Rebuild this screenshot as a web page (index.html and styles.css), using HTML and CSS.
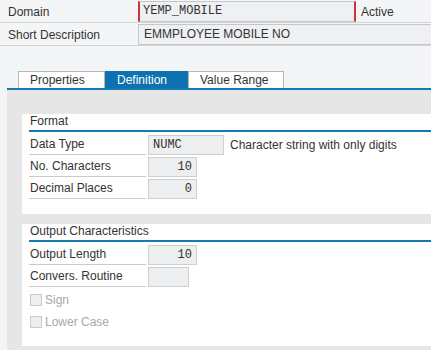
FILE: index.html
```html
<!DOCTYPE html>
<html lang="en">
<head>
  <meta charset="UTF-8" />
  <title>Domain YEMP_MOBILE</title>
  <link rel="stylesheet" href="styles.css">
</head>
<body>

  <!-- Header fields -->
  <div class="head">
    <div class="hrow">
      <span class="hlabel">Domain</span>
      <span class="hfield mono focus">YEMP_MOBILE</span>
      <span class="status">Active</span>
    </div>
    <div class="hrow">
      <span class="hlabel">Short Description</span>
      <span class="hfield wide">EMMPLOYEE MOBILE NO</span>
    </div>
  </div>

  <!-- Tab strip -->
  <div class="tabs">
    <span class="tab t-props">Properties</span>
    <span class="tab t-def active">Definition</span>
    <span class="tab t-range">Value Range</span>
  </div>
  <div class="tabline"></div>

  <div class="panel">
    <!-- Format -->
    <div class="group g-format">
      <div class="ghead">Format</div>
      <div class="row">
        <span class="label">Data Type</span>
        <span class="field mono f-type">NUMC</span>
        <span class="desc">Character string with only digits</span>
      </div>
      <div class="row">
        <span class="label">No. Characters</span>
        <span class="field mono num">10</span>
      </div>
      <div class="row">
        <span class="label">Decimal Places</span>
        <span class="field mono num">0</span>
      </div>
    </div>

    <!-- Output Characteristics -->
    <div class="group g-output">
      <div class="ghead">Output Characteristics</div>
      <div class="row">
        <span class="label">Output Length</span>
        <span class="field mono num">10</span>
      </div>
      <div class="row">
        <span class="label">Convers. Routine</span>
        <span class="field f-conv"></span>
      </div>
      <div class="checks">
        <label class="check"><span class="box"></span>Sign</label>
        <label class="check"><span class="box"></span>Lower Case</label>
      </div>
    </div>
  </div>

</body>
</html>
```

FILE: styles.css
```css
/* Global */
body {
  margin: 0;
  font-family: 'Liberation Sans', Arial, sans-serif;
  font-size: 12px;
  color: #333;
  background-color: #f4f5f6;
  overflow: hidden;
}

.mono {
  font-family: 'Liberation Mono', 'Courier New', monospace;
  font-size: 12px;
}

/* Header rows */
.head {
  padding-top: 1px;
}

.hrow {
  display: flex;
  align-items: center;
  height: 21px;
  border-bottom: 1px solid #d2d4d6;
  margin-bottom: 1px;
}

.hlabel {
  width: 130px;
  padding-left: 8px;
}

.hfield {
  box-sizing: border-box;
  height: 21px;
  line-height: 19px;
  padding-left: 5px;
  background-color: #eef0f2;
  border: 1px solid #c4c8cc;
}

.hfield.focus {
  width: 218px;
  border-left: 2px solid #c8363a;
  border-right: 2px solid #c8363a;
  padding-left: 3px;
}

.hfield.wide {
  flex: 1;
  font-size: 12px;
  border-right: none;
}

.status {
  padding-left: 5px;
}

/* Tabs */
.tabs {
  display: flex;
  margin: 25px 0 0 18px;
}

.tab {
  box-sizing: border-box;
  height: 17px;
  line-height: 16px;
  padding-left: 11px;
  background-color: #fff;
  border: 1px solid #b4b8bc;
  border-bottom: none;
}

.t-props { width: 87px; }
.t-def { width: 83px; }
.t-range { width: 96px; }

.tab.active {
  background-color: #0e72b0;
  border-color: #0e72b0;
  color: #fff;
}

.tabline {
  height: 2px;
  margin-left: 7px;
  background-color: #137ab3;
}

/* Panel */
.panel {
  margin-left: 7px;
  padding: 24px 0 5px 15px;
  background-color: #e6e6e6;
}

.group {
  background-color: #fff;
  padding-left: 7px;
}

.g-format {
  height: 100px;
  margin-bottom: 10px;
}

.g-output {
  height: 122px;
}

.ghead {
  height: 16px;
  line-height: 14px;
  padding-left: 1px;
  border-bottom: 2px solid #137ab3;
  margin-bottom: 2px;
}

.row {
  display: flex;
  align-items: center;
  height: 21px;
  margin-bottom: 1px;
}

.label {
  box-sizing: border-box;
  width: 117px;
  height: 21px;
  line-height: 20px;
  padding-left: 1px;
  border-bottom: 1px solid #c8cacc;
}

.field {
  box-sizing: border-box;
  height: 20px;
  line-height: 18px;
  margin-left: 2px;
  padding: 0 4px;
  background-color: #eceef0;
  border: 1px solid #cdd0d3;
}

.f-type {
  width: 76px;
}

.num {
  width: 49px;
  text-align: right;
}

.f-conv {
  width: 41px;
}

.desc {
  padding-left: 6px;
}

/* Disabled checkboxes */
.checks {
  padding-top: 1px;
}

.check {
  display: flex;
  align-items: center;
  height: 22px;
  padding-left: 1px;
  color: #a8a8a8;
}

.box {
  box-sizing: border-box;
  width: 12px;
  height: 12px;
  margin-right: 3px;
  background-color: #eceeef;
  border: 1px solid #c8cacc;
}
```
